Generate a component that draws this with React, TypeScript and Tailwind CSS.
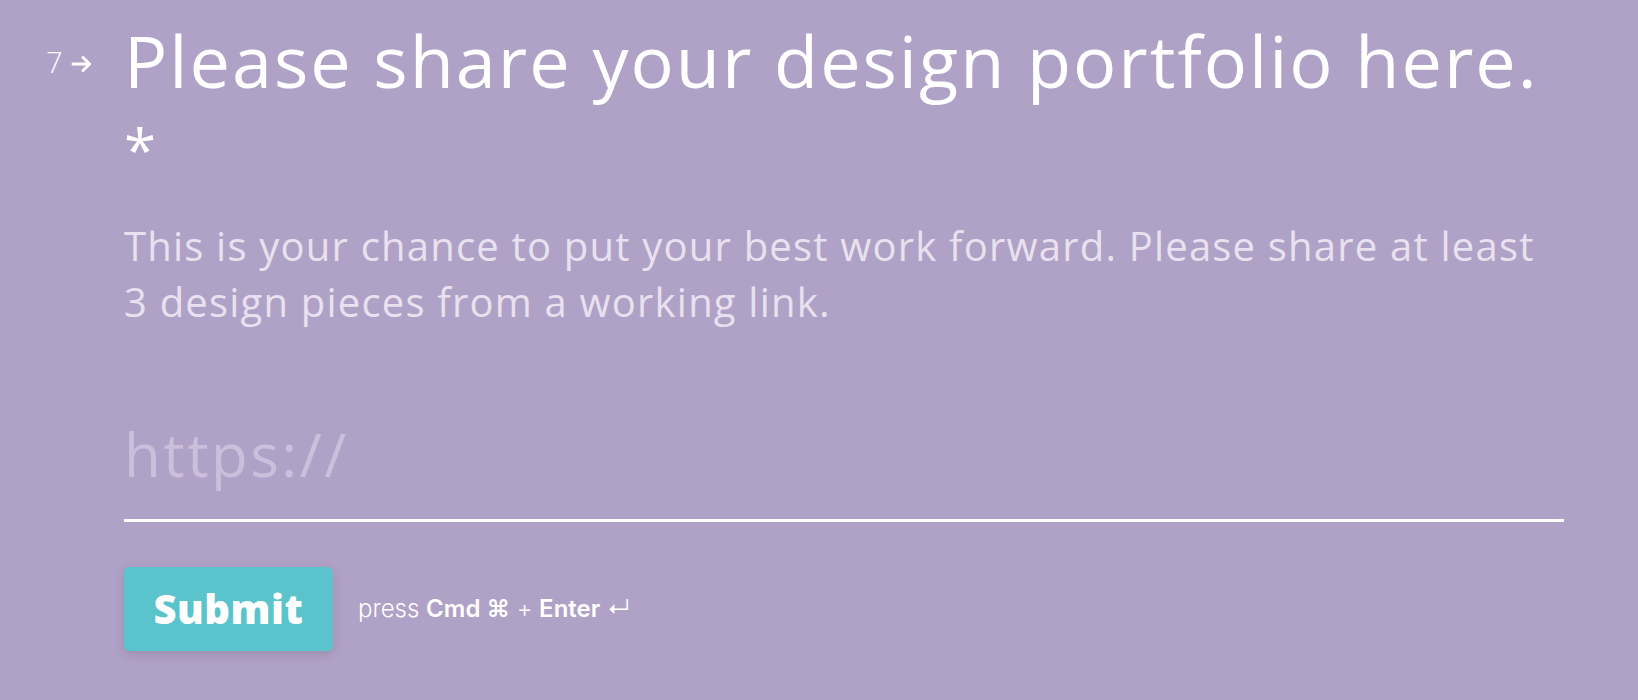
import React from "react";

const ArrowIcon: React.FC = () => (
  <svg width="21" height="18" viewBox="0 0 21 18" fill="none" stroke="white" strokeWidth="3" strokeLinecap="round" strokeLinejoin="round">
    <path d="M2 9 H18.5" />
    <path d="M12 2.5 L18.5 9 L12 15.5" />
  </svg>
);

const App: React.FC = () => {
  return (
    <div className="min-h-screen w-full bg-[#b0a1c6] text-white font-['Open_Sans',sans-serif]">
      <div className="flex pl-[46px] pt-[17px]">
        <div className="w-[78px] shrink-0 mt-[30px] flex items-start">
          <span className="text-[29px] leading-[29px] font-light">7</span>
          <span className="ml-[8px] mt-[8px]">
            <ArrowIcon />
          </span>
        </div>

        <div className="w-[1440px] shrink-0">
          <h1 className="text-[72px] leading-[86px] font-normal tracking-[2px]">
            Please share your design portfolio here.
            <span className="block text-[58px] leading-[86px] pt-[4px]">*</span>
          </h1>

          <p className="mt-[25px] text-[40px] leading-[56px] text-[#e8e1ef] tracking-[1.2px]">
            This is your chance to put your best work forward. Please share at least
            <br />3 design pieces from a working link.
          </p>

          <input
            type="text"
            placeholder="https://"
            className="mt-[88px] block w-full bg-transparent outline-none text-[60px] leading-[72px] tracking-[2.5px] pb-[29px] border-b-[3px] border-white text-white placeholder:text-[#cbbfdb]"
          />

          <div className="mt-[45px] flex items-center gap-[25px]">
            <button className="h-[84px] w-[209px] rounded-[5px] bg-[#5ac3cb] text-[40px] font-extrabold tracking-[0.5px] text-white shadow-[0_3px_12px_0_rgba(0,0,0,0.12)]">
              Submit
            </button>
            <span className="font-['Inter',sans-serif] text-[24px] font-light text-white">
              press <span className="font-semibold">Cmd ⌘</span> + <span className="font-semibold">Enter</span> ↵
            </span>
          </div>
        </div>
      </div>
    </div>
  );
};

export default App;
